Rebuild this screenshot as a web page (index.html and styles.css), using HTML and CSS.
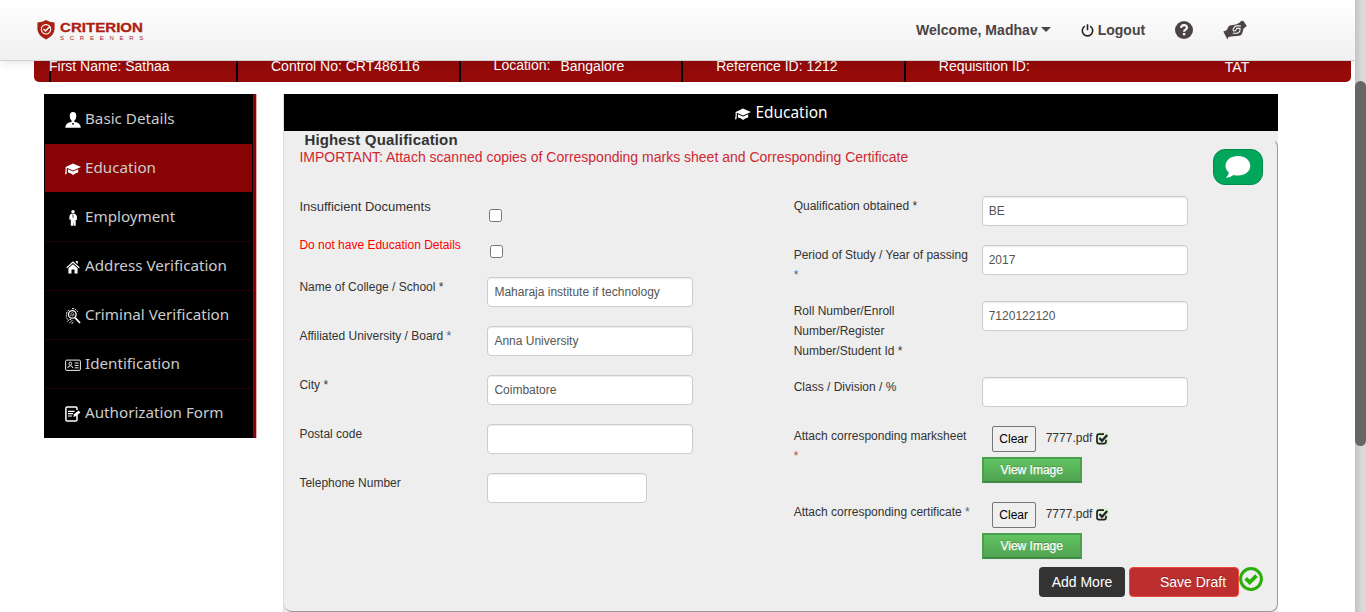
FILE: index.html
```html
<!DOCTYPE html>
<html lang="en">
<head>
<meta charset="utf-8">
<title>Criterion Screeners - Education</title>
<link rel="stylesheet" href="styles.css">
</head>
<body>
<svg class="defs" width="0" height="0" aria-hidden="true">
  <symbol id="cap" viewBox="0 0 16 13"><path d="M8 0.5 16 4 8 7.6 1.8 4.8V7.4L1.5 11 0 11.5.6 7.5V4.1Z"/><path d="M3 6.3 8 8.6 13.2 6.3V9.6Q11 10 8 12 5.8 10 3 9.6Z"/></symbol>
  <symbol id="tick" viewBox="0 0 14 13"><path fill="#dff0d8" d="M1 0H14V13H1Z"/><path d="M9 2.2H4.2Q2 2.2 2 4.4V9.4Q2 11.6 4.2 11.6H8.8Q11 11.6 11 9.4V7.7" fill="none" stroke="#222" stroke-width="1.7"/><path d="M4.4 6 7 8.7 12.2 3" fill="none" stroke="#222" stroke-width="2.3"/></symbol>
</svg>
<div class="window">
  <div class="page">
    <header class="top">
      <div class="brand">
        <svg width="18" height="20" viewBox="0 0 18 20"><path fill="#aa2113" d="M9 0Q12 2 17.6 2.5V9Q17.3 15.5 9 19.6.7 15.5.4 9V2.5Q6 2 9 0Z"/><circle cx="9" cy="9.3" r="4.7" fill="none" stroke="#fff" stroke-width="1.1"/><path d="M6.5 9.1 8.5 11 13 6.3" fill="none" stroke="#fff" stroke-width="1.4"/></svg>
        <div class="brand-text"><span class="brand-name">CRITERION</span><span class="brand-sub">SCREENERS</span></div>
      </div>
      <nav class="links">
        <span class="welcome">Welcome, Madhav</span><i class="caret"></i>
        <svg class="power" width="13" height="13" viewBox="0 0 13 13"><path d="M4 2.1A5.2 5.2 0 1 0 9 2.1M6.5.2V6.2" fill="none" stroke="#222" stroke-width="1.6"/></svg>
        <span class="logout">Logout</span>
        <svg class="help" width="18" height="18" viewBox="0 0 18 18"><circle cx="9" cy="9" r="9" fill="#4b4344"/><path d="M6.1 6.9Q6.2 4.1 9 4.1T12 6.6Q12 7.9 10.4 8.7 9.1 9.3 9.1 10.7" fill="none" stroke="#f8f8f8" stroke-width="2.2"/><path fill="#f8f8f8" d="M7.9 12h2.4v2.3H7.9z"/></svg>
        <svg class="hands" width="24" height="20" viewBox="0 0 24 20"><path fill="#4b4344" d="M.3 11.5 3.6 10.2 5.6 6.6Q6.4 5.2 8.4 5.2L13 4.4 16.5 2.8 18.4.8 20.4 1 23.8 6 20.6 8.4 19.2 13.2Q18.6 15.4 16.4 15.7L8 16.4 5.4 16.9 4.4 19.4Z"/><path d="M17.8 5.9H13.6Q11.4 6 11 7.8L10 9.6Q9.8 11 11.4 11 13 10.8 13.8 8.4H17V10.4Q16.4 13 13.8 13.2H9.8" fill="none" stroke="#f5f5f5" stroke-width="1.1"/></svg>
      </nav>
    </header>
    <div class="strip">
      <div class="cell first"><span>First Name: Sathaa</span></div>
      <div class="cell"><span class="control">Control No: CRT486116</span></div>
      <div class="cell place"><span>Location:</span><span>Bangalore</span></div>
      <div class="cell"><span>Reference ID: 1212</span></div>
      <div class="cell last"><span>Requisition ID:</span><span class="tat">TAT</span></div>
    </div>
    <main class="main">
      <ul class="menu">
        <li><svg viewBox="0 0 16 16"><path d="M8 0Q11.3 0 11.3 4 11.3 7 9.4 8.5V10Q15.5 10.7 15.8 15.7H.2Q.5 10.7 6.6 10V8.5Q4.7 7 4.7 4 4.7 0 8 0Z"/><path d="M7.2 11h1.6l-.4 2h-.8z" fill="#000"/></svg><span>Basic Details</span></li>
        <li class="active"><svg viewBox="0 -2 16 16"><use href="#cap" width="16" height="13"/></svg><span>Education</span></li>
        <li><svg viewBox="0 0 16 16"><circle cx="8" cy="1.7" r="1.7"/><path d="M6 3.8H10L11.9 6V10H10.7V15.7H8.6L8 11.5V15.7H5.8V9.5H4.2L4.6 5.4Z"/><path d="M7.8 4.4 8.2 8" stroke="#000" stroke-width=".7"/></svg><span>Employment</span></li>
        <li><svg viewBox="0 0 16 16"><path d="M1.2 8.4 8 2.2 14.8 8.4 13.8 9.3 8 4.1 2.2 9.3Z"/><path d="M3.4 9.2 8 5.2 12.6 9.2V14.5H9.5V10.5H6.5V14.5H3.4ZM10.8 2H12.8V5L10.8 3.3Z"/></svg><span>Address Verification</span></li>
        <li><svg viewBox="0 0 16 16"><g fill="none" stroke="#fff"><circle cx="7.3" cy="6.4" r="3.8" stroke-width="1.3"/><path d="M10 9.6 15 15" stroke-width="1.8"/><path d="M7 .6Q11 .5 12.8 4M4 1.9Q.9 4 1.4 8.6Q2 11 3 12M2.4 13.4 5 11 7.3 12.5 4.4 15M6.5 15.6 9.2 13.7" stroke-width="1" stroke-dasharray="2 .8"/><path d="M5.7 8Q5.6 4.4 7.4 4.5T8.9 8M7.3 6V8.4" stroke-width=".6"/></g></svg><span>Criminal Verification</span></li>
        <li><svg viewBox="0 0 16 16"><g fill="none" stroke="#eee"><rect x=".6" y="3.1" width="14.8" height="10.3" rx="1.2" stroke-width="1"/><circle cx="5.3" cy="6.6" r="1.4"/><path d="M2.8 11Q3 8.8 5.3 8.8T7.8 11M9.7 6H13.6M9.7 8.4H13.6M9.7 10.8H13.6"/></g></svg><span>Identification</span></li>
        <li><svg viewBox="0 0 16 16"><path d="M12 9V13.8Q12 15.1 10.7 15.1H2.2Q.9 15.1.9 13.8V2.2Q.9.9 2.2.9H10.7Q12 .9 12 2.2V4" fill="none" stroke="#fff" stroke-width="1.5"/><path d="M3 5.4H9.5M3 7.7H8M3 10H7" stroke="#fff" stroke-width="1.2"/><path d="M8.3 10.8 9 8.2 13.6 4.4 15.4 6.5 10.8 10.3Z"/></svg><span>Authorization Form</span></li>
      </ul>
      <section class="panel">
        <h1 class="panel-head"><svg width="16" height="13"><use href="#cap"/></svg><span>Education</span></h1>
        <div class="field-box">
          <h2 class="legend">Highest Qualification</h2>
          <p class="important">IMPORTANT: Attach scanned copies of Corresponding marks sheet and Corresponding Certificate</p>
          <div class="columns">
            <div class="col">
              <div class="row docs"><label>Insufficient Documents</label><input type="checkbox"></div>
              <div class="row none"><label>Do not have Education Details</label><input type="checkbox"></div>
              <div class="row"><label>Name of College / School *</label><input class="text" value="Maharaja institute if technology"></div>
              <div class="row"><label>Affiliated University / Board <b>*</b></label><input class="text" value="Anna University"></div>
              <div class="row"><label>City *</label><input class="text" value="Coimbatore"></div>
              <div class="row"><label>Postal code</label><input class="text"></div>
              <div class="row"><label>Telephone Number</label><input class="text short"></div>
            </div>
            <div class="col right">
              <div class="row"><label>Qualification obtained *</label><input class="text" value="BE"></div>
              <div class="row two"><label>Period of Study / Year of passing <b>*</b></label><input class="text" value="2017"></div>
              <div class="row three"><label>Roll Number/Enroll<br>Number/Register<br>Number/Student Id *</label><input class="text" value="7120122120"></div>
              <div class="row"><label>Class / Division / %</label><input class="text"></div>
              <div class="row file"><label>Attach corresponding marksheet <em>*</em></label><div class="upload"><div class="picked"><button class="clear">Clear</button><span>7777.pdf</span><svg width="14" height="13"><use href="#tick"/></svg></div><button class="view">View Image</button></div></div>
              <div class="row file"><label>Attach corresponding certificate <b>*</b></label><div class="upload"><div class="picked"><button class="clear">Clear</button><span>7777.pdf</span><svg width="14" height="13"><use href="#tick"/></svg></div><button class="view">View Image</button></div></div>
            </div>
          </div>
          <div class="actions">
            <button class="add">Add More</button><button class="save">Save Draft</button>
            <svg width="24" height="24" viewBox="0 0 24 24" fill="none" stroke="#28b008"><circle cx="12" cy="12" r="10.4" stroke-width="3"/><path d="M6.7 11.3 10.7 15.3 17.5 8.6" stroke-width="3.8"/></svg>
          </div>
        </div>
        <div class="chat"><svg width="26" height="22" viewBox="0 0 26 22"><path fill="#fff" d="M13 0C20 0 25.3 4.2 25.3 9.8S20 19.6 13 19.6Q10.6 19.6 8.5 19 5.3 21.8 1 21.7 3.5 19.6 3.8 16.6.5 13.8.5 9.8C.5 4.2 6 0 13 0Z"/></svg></div>
      </section>
    </main>
  </div>
  <div class="scrollbar"><div class="thumb"></div></div>
</div>
</body>
</html>
```
FILE: styles.css
```css
* { box-sizing: border-box; }
body { margin: 0; background: #fff; color: #333; font: 12px/20px "Liberation Sans", Arial, sans-serif; overflow: hidden; }
.defs { position: absolute; }
.window { display: flex; height: 612px; overflow: hidden; }
.page { width: 1355px; height: 612px; overflow: hidden; }
.top { position: relative; z-index: 2; display: flex; justify-content: space-between; height: 61px; padding-left: 37px; background: linear-gradient(#fff, #f0f0f0); border-bottom: 1px solid #d0d0d0; box-shadow: 0 1px 10px rgba(0,0,0,.12); }
.brand { display: flex; gap: 5px; padding-top: 19px; }
.brand svg { margin-top: 1px; }
.brand-text { display: flex; flex-direction: column; color: #aa2113; padding-top: 2px; }
.brand-name { width: 74px; height: 13px; font: bold 13px/13px "Liberation Sans", Arial, sans-serif; transform: scaleX(1.16); transform-origin: left; white-space: nowrap; -webkit-text-stroke: .3px #aa2113; }
.brand-sub { margin-top: 1px; font-size: 6px; line-height: 7px; letter-spacing: 5.75px; }
.links { display: flex; align-items: center; width: 439px; color: #4b4344; font-weight: bold; font-size: 14px; }
.caret { margin: 0 30px 1px 3px; border: 0 solid transparent; border-top-color: #4b4344; border-width: 5px 5px 0; }
.welcome { letter-spacing: .04px; }
.power { margin-right: 4px; }
.help { margin-left: 30px; }
.hands { margin-left: 30px; }
.strip { display: flex; height: 31px; width: 1317px; margin: -10px 0 0 34px; padding-left: 15px; border-radius: 0 0 5px 5px; background: #960a0a; color: #fff; font-size: 14px; line-height: 30px; }
.cell { width: 222.6px; border-left: 2px solid #000; padding-left: 33px; white-space: nowrap; }
.cell.first { width: 187px; padding-left: 0; border-image: linear-gradient(#960a0a 20px, #000 20px) 1; }
.cell.first span { margin-left: -2px; }
.cell.place { display: flex; gap: 10px; line-height: 29px; }
.cell.place span + span { line-height: 31px; }
.cell.last { display: flex; width: 380px; }
.tat { margin-left: 195px; line-height: 32px; }
.main { display: flex; align-items: flex-start; padding: 12px 0 0 44px; }
.menu { width: 213px; height: 344px; margin: 0; padding: 0 4px 0 0; list-style: none; background: linear-gradient(90deg, #000 209px, #870306 209px, #870306 212px, #e0b0b0 212px); font: 15.2px/49px "Noto Sans", sans-serif; color: #ccc; }
.menu li { display: flex; align-items: flex-start; height: 49px; padding-left: 21px; border-bottom: 1px solid #240001; white-space: nowrap; }
.menu li:first-child { height: 50px; border: 0; }
.menu li.active { height: 48px; margin: 0 1px 1px; padding-left: 20px; background: #870306; border: 0; line-height: 47px; }
.menu li.active svg { margin-top: 17px; }
.menu li.active ~ li { line-height: 47px; }
.menu li.active ~ li svg { margin-top: 17px; }
.menu li:last-child { border: 0; height: 48px; }
.menu svg { width: 16px; height: 16px; margin: 18px 4px 0 0; fill: #fff; flex: none; }
.panel { position: relative; width: 995px; margin-left: 26px; border-left: 1px solid #ddd; background: #eee; }
.panel-head { display: flex; align-items: center; justify-content: center; gap: 5px; height: 37px; margin: 0; background: #000; color: #fff; fill: #fff; font: 15.4px/37px "Noto Sans", sans-serif; }
.panel-head svg { margin-top: 3px; }
.field-box { height: 473px; margin-top: 8px; padding-left: 15.4px; border: 1px solid #999; border-top-color: transparent; border-left: 0; border-radius: 0 8px 8px 8px; }
.legend { margin: -9px 0 0 5px; font: bold 15px/18px "Liberation Sans", Arial, sans-serif; letter-spacing: .16px; }
.important { margin: 0; color: #ce2832; font-size: 14px; line-height: 17px; }
.columns { display: flex; height: 401px; padding-top: 30px; }
.col { flex: none; width: 494.3px; }
.row { display: flex; align-items: flex-start; height: 49px; }
.row label { flex: none; width: 188px; padding-right: 10px; }
.row b { font-weight: normal; color: #46658c; }
.row em { font-style: normal; color: #c44f2d; }
.text { width: 206px; height: 30px; border: 1px solid #ccc; border-radius: 4px; padding: 0 6px; background: #fff; color: #555; font: 12px/20px "Liberation Sans", Arial, sans-serif; box-shadow: inset 0 1px 1px rgba(0,0,0,.08); }
.short { width: 160px; }
.row input[type=checkbox] { width: 13px; height: 13px; margin: 13px 0 0 2px; }
.docs { height: 38px; }
.docs label { padding-top: 1px; font-size: 13px; }
.none { height: 43px; }
.none label { padding: 1px 0 0; color: #f00; }
.none input[type=checkbox] { margin: 11px 0 0 3px; }
.two { height: 56px; }
.three { height: 76px; }
.file { height: 76px; }
.upload { display: flex; flex-direction: column; align-items: flex-start; }
.picked { display: flex; height: 31px; }
.clear { width: 44px; height: 26px; margin: 0 10px; padding: 0; border: 1px solid #767676; border-radius: 2px; background: #efefef; color: #000; font: 12px "Liberation Sans", Arial, sans-serif; }
.picked span { line-height: 24px; margin-right: 3px; }
.picked svg { margin-top: 6px; }
.view { width: 100px; height: 26px; padding: 0; border: 2px solid #4ba04d; border-bottom-color: #3f8942; background: linear-gradient(#62c462, #51a351); color: #fff; font: 12px "Liberation Sans", Arial, sans-serif; text-shadow: 0 -1px 0 rgba(0,0,0,.25); -webkit-text-stroke: .25px #fff; }
.actions { display: flex; justify-content: flex-end; padding-right: 14px; }
.actions button { height: 30px; padding: 0; border-radius: 4px; color: #fff; font: 14px "Liberation Sans", Arial, sans-serif; }
.actions .add { width: 86px; margin-right: 4px; border: 0; background: #333; }
.actions .save { width: 110px; padding-left: 18px; border: 1px solid #ee4a3a; background: #bd2f2f; text-shadow: 0 -1px 0 rgba(0,0,0,.25); }
.chat { position: absolute; top: 55px; right: 15px; display: flex; justify-content: center; padding-top: 6px; width: 50px; height: 36px; border: 1px solid #008d4c; border-radius: 12px; background: #00a65a; }
.scrollbar { width: 11px; padding-top: 81px; background: linear-gradient(90deg, #c4c4c4, #d9d9d9 7px); }
.thumb { height: 365px; border-radius: 6px; background: #666; }
```
